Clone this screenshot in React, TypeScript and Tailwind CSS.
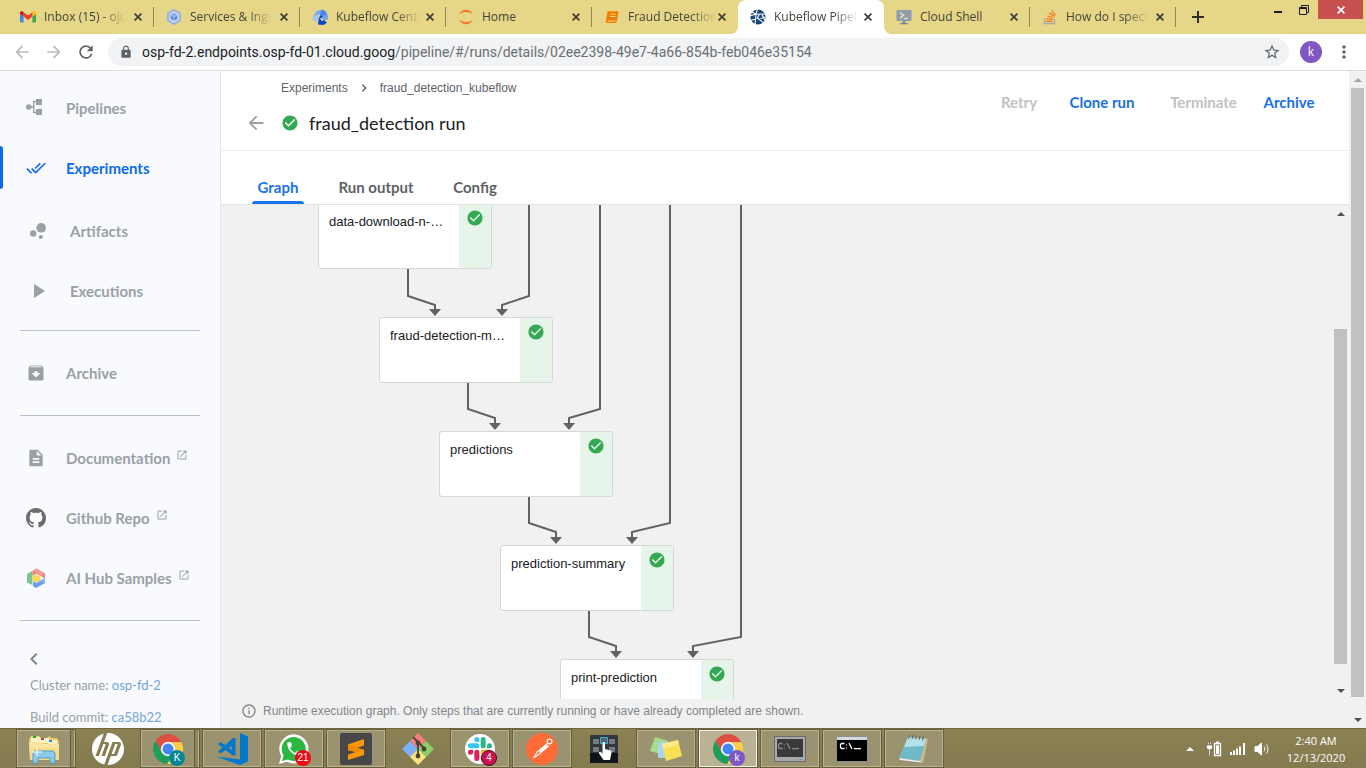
import React from "react";
import {
  MdArchive,
  MdArrowBack,
  MdArrowForward,
  MdBubbleChart,
  MdCheckCircle,
  MdChevronLeft,
  MdChevronRight,
  MdDescription,
  MdDoneAll,
  MdInfoOutline,
  MdLock,
  MdMoreVert,
  MdAdd,
  MdOpenInNew,
  MdPhone,
  MdPlayArrow,
  MdRefresh,
  MdStarBorder,
} from "react-icons/md";
import { SiHp } from "react-icons/si";

const uiFont = "font-['Open_Sans','Noto_Sans',sans-serif]";
const brandFont = "font-['Lato','Open_Sans',sans-serif]";

/* ---------- Browser tab icons ---------- */

const GmailIcon = () => (
  <svg viewBox="0 0 16 12" className="h-3 w-4">
    <path d="M1 11.5h2.6V5.6L0 3v7.5a1 1 0 0 0 1 1z" fill="#4285f4" />
    <path d="M12.4 11.5H15a1 1 0 0 0 1-1V3l-3.600 2.600z" fill="#34a853" />
    <path d="M12.4 1.200v4.400L16 3V1.700C16 .3 14.400-.3 13.400.5z" fill="#fbbc04" />
    <path d="M3.600 5.600V1.200L8 4.500l4.400-3.300v4.400L8 8.900z" fill="#ea4335" />
    <path d="M0 1.700V3l3.600 2.600V1.200l-1-.7C1.600-.3 0 .3 0 1.700z" fill="#c5221f" />
  </svg>
);

const ServicesIcon = () => (
  <svg viewBox="0 0 16 16" className="size-4">
    <path d="M8 1l6 3.400v7.200L8 15l-6-3.400V4.400z" fill="#c9d6e6" stroke="#8fabe8" strokeWidth="1.600" />
    <path d="M8 4.300l3.400 1.900v3.700L8 11.800 4.600 9.900V6.200z" fill="#5f8de8" />
    <path d="M8 4.300l3.400 1.900L8 8 4.600 6.200z" fill="#86a9f0" />
    <path d="M8 8v3.800M8 8l3.400-1.800M8 8L4.600 6.200" stroke="#c9d6e6" strokeWidth=".5" />
  </svg>
);

const KubeflowIcon = () => (
  <svg viewBox="0 0 16 16" className="size-4">
    <path d="M4.500 2L10 .6 8.500 5 1 8z" fill="#7ba9f7" />
    <path d="M10 .6l3.600 1.700L15.500 6 7.500 6z" fill="#4a86f0" />
    <path d="M.3 7.500L7 5.300 4.500 13.500 1.200 11z" fill="#a3c2fa" />
    <path d="M8 6l7.600 0L16 10l-3.500 1.500z" fill="#6f9ff5" />
    <path d="M7 7.500l8 6-3.500 2.400-5.500-.4z" fill="#0c46c9" />
    <path d="M8 6.500h3.500L7.500 11z" fill="#0c46c9" />
    <path d="M7.300 8.500L11.500 11l-1.500 1z" fill="#fff" />
  </svg>
);

const JupyterIcon = () => (
  <svg viewBox="0 0 16 16" className="size-4">
    <path d="M1 5.500C2.500 2.300 5 .8 8 .8s5.500 1.500 7 4.700C13 3.700 10.700 3 8 3s-5 .7-7 2.500z" fill="#f37726" />
    <path d="M1 10.500c1.500 3.200 4 4.700 7 4.700s5.500-1.500 7-4.700c-2 1.800-4.300 2.500-7 2.500s-5-.7-7-2.500z" fill="#f37726" />
  </svg>
);

const BookIcon = () => (
  <svg viewBox="0 0 16 16" className="size-4">
    <path d="M4.800 2.200h8.800c.6 0 .9.400.8 1L12.800 12.500c-.1.700-.7 1.500-1.500 1.500H3.200c-1 0-1.600-.7-1.400-1.700l1.500-8.800c.1-.8.800-1.300 1.500-1.300z" fill="#f57c00" />
    <path d="M6.300 5.200h5.400M5.900 7.500h5.400M3.400 12h8" stroke="#f3dba0" strokeWidth="1" />
  </svg>
);

const PipelineLogo = () => (
  <svg viewBox="0 0 16 16" className="size-4">
    <circle cx="8" cy="8" r="7.600" fill="#17477c" />
    <path d="M0 6.800l6-1.600L5 16M6 5.200L7.500 0M6 5.200L16 5M9.500 5l-2.500 5M7.500 9l7 5.500M1 2.500L6 5.200M12 5.500l3.500 7M10.500 9.500l5-1.500M0 11.500l6-1.500" stroke="#fff" strokeWidth="1.100" fill="none" />
  </svg>
);

const CloudShellIcon = () => (
  <svg viewBox="0 0 16 16" className="size-4">
    <rect x=".5" y="1" width="15" height="11" rx="1" fill="#8f9bb0" />
    <path d="M6.500 12h3v2H12v1.200H4V14h2.500z" fill="#7d8899" />
    <path d="M4 3.500l3.500 2.700L4 9" stroke="#f3e3a0" strokeWidth="1.500" fill="none" />
    <path d="M8 9.500h4" stroke="#f3e3a0" strokeWidth="1.300" />
  </svg>
);

const StackOverflowIcon = () => (
  <svg viewBox="0 0 16 16" className="size-4">
    <path d="M2.500 9.500v5h10v-5" stroke="#a9a9a2" strokeWidth="1.400" fill="none" />
    <path d="M4.300 12.200h6.400M4.500 9.700l6.300.7M5.300 6.900l6 1.900M7 3.900l5.200 3.400M9.700 1.500l3.600 4.800" stroke="#f48024" strokeWidth="1.400" fill="none" />
  </svg>
);

type Tab = { title: string; icon: React.ReactNode; active?: boolean; divider?: boolean };

const tabs: Tab[] = [
  { title: "Inbox (15) - oju", icon: <GmailIcon />, divider: true },
  { title: "Services & Ingr", icon: <ServicesIcon />, divider: true },
  { title: "Kubeflow Centr", icon: <KubeflowIcon />, divider: true },
  { title: "Home", icon: <JupyterIcon />, divider: true },
  { title: "Fraud Detection", icon: <BookIcon /> },
  { title: "Kubeflow Pipeli", icon: <PipelineLogo />, active: true },
  { title: "Cloud Shell", icon: <CloudShellIcon />, divider: true },
  { title: "How do I specif", icon: <StackOverflowIcon />, divider: true },
];

function BrowserTab({ tab }: { tab: Tab }) {
  const fade = tab.title.length > 12;
  return (
    <div className={`relative flex h-full w-[146px] shrink items-center pl-3 pr-2 ${tab.active ? "rounded-t-lg bg-white" : ""}`}>
      {tab.active && (
        <>
          <span className="absolute bottom-0 -left-2 size-2 bg-[radial-gradient(circle_at_0_0,transparent_8px,white_8px)]" />
          <span className="absolute bottom-0 -right-2 size-2 bg-[radial-gradient(circle_at_100%_0,transparent_8px,white_8px)]" />
        </>
      )}
      <a href="#" className="flex min-w-0 flex-1 items-center gap-2">
        <span className="flex size-4 shrink-0 items-center justify-center">{tab.icon}</span>
        <span className={`whitespace-nowrap text-xs text-[#45443a] ${fade ? "[mask-image:linear-gradient(to_right,black_70%,transparent_98%)]" : ""}`}>
          {tab.title}
        </span>
      </a>
      <button aria-label={`Close ${tab.title}`} className="flex size-4 shrink-0 items-center justify-center">
        <svg viewBox="0 0 8 8" className="size-2" fill="none" stroke="#3c3b30" strokeWidth="1.700">
          <path d="M.6.6l6.800 6.800M7.400.6L.6 7.400" />
        </svg>
      </button>
      {tab.divider && <span className="absolute right-0 top-[7px] h-5 w-px bg-[#8f8654]" />}
    </div>
  );
}

function BrowserChrome() {
  return (
    <header className={`shrink-0 ${uiFont}`}>
      <div className="flex h-[34px] bg-[#e6d687] pl-2">
        <div className="flex min-w-0">
          {tabs.map((t) => (
            <BrowserTab key={t.title} tab={t} />
          ))}
        </div>
        <button aria-label="New tab" className="ml-3 flex w-5 items-center justify-center">
          <svg viewBox="0 0 12 12" className="size-3" stroke="#2e2d26" strokeWidth="2">
            <path d="M6 0v12M0 6h12" />
          </svg>
        </button>
        <div className="ml-auto flex items-start pr-[3px]">
          <button aria-label="Minimize" className="flex h-[19px] w-6 items-center justify-center">
            <span className="mt-1 h-0.5 w-2 bg-[#1d1c17]" />
          </button>
          <button aria-label="Restore" className="flex h-[19px] w-7 items-center justify-center">
            <svg viewBox="0 0 10 10" className="size-2.5" fill="none" stroke="#1d1c17">
              <path d="M2.500 2V.5h7v7H8" />
              <path d="M.5 2.500h7v7h-7z" />
              <path d="M.5 3.500h7" />
            </svg>
          </button>
          <button aria-label="Close window" className="flex h-[19px] w-[45px] items-center justify-center bg-[#c75050]">
            <svg viewBox="0 0 8 8" className="size-2" stroke="#fff" strokeWidth="1.700">
              <path d="M.6.6l6.800 6.800M7.400.6L.6 7.400" />
            </svg>
          </button>
        </div>
      </div>
      <div className="flex h-[37px] items-center border-b border-[#dadce0] bg-white pl-3 pr-3">
        <button aria-label="Back" className="mr-3 text-[#b9bbbe]"><MdArrowBack className="size-5" /></button>
        <button aria-label="Forward" className="mr-3 text-[#b9bbbe]"><MdArrowForward className="size-5" /></button>
        <button aria-label="Reload" className="mr-3 text-[#5f6368]"><MdRefresh className="size-5" /></button>
        <div className="flex h-7 flex-1 items-center rounded-full bg-[#f1f3f4] pl-[11px] pr-2">
          <MdLock className="mr-[9px] size-3.5 text-[#5f6368]" />
          <p className="flex-1 whitespace-nowrap font-['Roboto','Open_Sans',sans-serif] text-sm text-[#6b6f74]">
            <span className="text-[#202124]">osp-fd-2.endpoints.osp-fd-01.cloud.goog</span>
            /pipeline/#/runs/details/02ee2398-49e7-4a66-854b-feb046e35154
          </p>
          <button aria-label="Bookmark" className="text-[#5f6368]"><MdStarBorder className="size-[18px]" /></button>
        </div>
        <button aria-label="Profile" className="ml-[11px] size-[22px] rounded-full bg-[#7e57c2] text-xs leading-none text-white">k</button>
        <button aria-label="Menu" className="ml-3 text-[#5f6368]"><MdMoreVert className="size-5" /></button>
      </div>
    </header>
  );
}

/* ---------- Scroll bar ---------- */

function ScrollBar({ grow, thumb, topMuted, tail }: { grow: string; thumb: string; topMuted?: boolean; tail: string }) {
  return (
    <div aria-hidden className="flex w-[17px] shrink-0 flex-col items-center bg-[#f1f1f1]">
      <div className="flex h-[17px] shrink-0 items-center">
        <svg viewBox="0 0 8 4" className="h-1 w-2"><path d="M0 4l4-4 4 4z" fill={topMuted ? "#a3a3a3" : "#505050"} /></svg>
      </div>
      <div className={grow} />
      <div className={`w-[13px] bg-[#c1c1c1] ${thumb}`} />
      <div className={tail} />
      <div className="flex h-[17px] shrink-0 items-center">
        <svg viewBox="0 0 8 4" className="h-1 w-2"><path d="M0 0l4 4 4-4z" fill="#505050" /></svg>
      </div>
    </div>
  );
}

/* ---------- Side navigation ---------- */

const PipelinesIcon = () => (
  <svg viewBox="0 0 20 20" className="size-5" fill="currentColor">
    <circle cx="2.700" cy="9" r="2.700" />
    <path d="M10 1h6v6h-6zM10 11h6v6h-6z" />
    <path d="M5 9h3M10.500 3.500H7.800v11h2.700" fill="none" stroke="currentColor" strokeWidth="1.400" />
  </svg>
);

const GithubIcon = () => (
  <svg viewBox="0 0 16 16" className="size-5" fill="#6b6b6b">
    <path d="M8 0C3.580 0 0 3.580 0 8c0 3.540 2.290 6.530 5.470 7.590.4.070.55-.17.55-.38 0-.19-.01-.82-.01-1.490-2.010.37-2.530-.49-2.690-.94-.09-.23-.48-.94-.82-1.130-.28-.15-.68-.52-.01-.53.63-.01 1.080.58 1.230.82.72 1.210 1.870.87 2.330.66.07-.52.28-.87.51-1.070-1.780-.2-3.640-.89-3.640-3.950 0-.87.31-1.590.82-2.150-.08-.2-.36-1.020.08-2.120 0 0 .67-.21 2.200.82.64-.18 1.320-.27 2-.27s1.360.09 2 .27c1.530-1.040 2.200-.82 2.200-.82.44 1.100.16 1.920.08 2.120.51.56.82 1.270.82 2.150 0 3.070-1.870 3.750-3.650 3.950.29.25.54.73.54 1.480 0 1.070-.01 1.930-.01 2.200 0 .21.15.46.55.38A8.013 8.013 0 0 0 16 8c0-4.420-3.580-8-8-8z" />
  </svg>
);

const AiHubIcon = () => (
  <svg viewBox="0 0 20 20" className="size-5">
    <path d="M1 6l5.500-3.200V8L6.300 13v4L1 14.500z" fill="#7cc492" />
    <path d="M6.500 3L10.500.5 19 5.400v5.200l-5-3.100-3.500-2-3.800 2.200z" fill="#ef7d74" />
    <path d="M6.500 3L10.500.5 19 5.400l-4.300 2.500z" fill="#f39c95" />
    <path d="M19 10v5l-9 5-3-1.800v-5l3.500 1.700 4-2.400z" fill="#6d9df0" />
    <path d="M19 10v5l-5-2.500z" fill="#8fb4f5" />
    <path d="M10.300 6.200l4 2.200v4.200l-4 2.200-3.900-2.200V8.400z" fill="#fbd65b" />
  </svg>
);

function NavItem({ icon, label, active, inset, external }: { icon: React.ReactNode; label: string; active?: boolean; inset?: boolean; external?: boolean }) {
  return (
    <a
      href="#"
      className={`relative flex h-[60px] shrink-0 items-center text-[15px] font-bold ${inset ? "gap-[22px] pl-7" : "gap-5 pl-[26px]"} ${active ? "text-[#0d6aee]" : "text-[#9aa0a6]"}`}
    >
      {active && <span className="absolute left-0 top-2 h-[43px] w-[3px] rounded-r bg-[#0d6aee]" />}
      <span className="flex size-5 shrink-0 items-center justify-center">{icon}</span>
      <span className="flex items-center gap-1.5">
        {label}
        {external && <MdOpenInNew className="mb-1.5 size-3" />}
      </span>
    </a>
  );
}

const Rule = ({ className }: { className: string }) => <div className={`mx-5 h-px shrink-0 bg-[#bdc1c6] ${className}`} />;

function Sidebar() {
  return (
    <nav className={`flex w-[221px] shrink-0 flex-col overflow-hidden border-r border-[#e3e5ea] bg-[#f8fafd] pt-[7px] ${brandFont}`}>
      <NavItem icon={<PipelinesIcon />} label="Pipelines" />
      <NavItem icon={<MdDoneAll className="size-5" />} label="Experiments" active />
      <div className="h-[3px] shrink-0" />
      <NavItem icon={<MdBubbleChart className="size-6 shrink-0" />} label="Artifacts" inset />
      <NavItem icon={<MdPlayArrow className="size-6 shrink-0" />} label="Executions" inset />
      <Rule className="mb-3 mt-[9px]" />
      <NavItem icon={<MdArchive className="size-5" />} label="Archive" />
      <Rule className="my-3" />
      <NavItem icon={<MdDescription className="size-5" />} label="Documentation" external />
      <NavItem icon={<GithubIcon />} label="Github Repo" external />
      <NavItem icon={<AiHubIcon />} label="AI Hub Samples" external />
      <Rule className="my-3" />
      <button aria-label="Collapse navigation" className="ml-[22px] mt-3.5 flex size-6 shrink-0 items-center justify-center text-[#80868b]">
        <MdChevronLeft className="size-6" />
      </button>
      <p className="ml-[30px] mt-1 shrink-0 whitespace-nowrap text-[13px] leading-5 text-[#9aa0a6]">
        Cluster name: <a href="#" className="text-[#74a4dc]">osp-fd-2</a>
      </p>
      <p className="ml-[30px] mt-3 shrink-0 whitespace-nowrap text-[13px] leading-5 text-[#9aa0a6]">
        Build commit: <a href="#" className="text-[#74a4dc]">ca58b22</a>
      </p>
    </nav>
  );
}

/* ---------- Run graph ---------- */

const nodes = [
  { label: "data-download-n-clean", place: "left-[97px] -top-[2px]" },
  { label: "fraud-detection-model", place: "left-[158px] top-[112px]" },
  { label: "predictions", place: "left-[218px] top-[226px]" },
  { label: "prediction-summary", place: "left-[279px] top-[340px]" },
  { label: "print-prediction", place: "left-[339px] top-[454px]" },
];

const edges = [
  "M187 64V91L214 100V106",
  "M308 0V91L281 100V106",
  "M247 178V204L274 213V220",
  "M379 0V204L348 213V220",
  "M308 292V318L335 327V334",
  "M449 0V318L411 327V334",
  "M368 406V432L395 441V448",
  "M520 0V432L472 441V448",
];

const arrowHeads = [[214, 104], [281, 104], [274, 218], [348, 218], [335, 332], [411, 332], [395, 446], [472, 446]];

function Graph() {
  return (
    <div className="relative min-w-0 flex-1 overflow-hidden">
      <svg className="absolute left-0 top-0" width="760" height="494" fill="none" stroke="#5f6368" strokeWidth="2">
        {edges.map((d) => <path key={d} d={d} />)}
        {arrowHeads.map(([x, y]) => (
          <path key={`${x}-${y}`} d={`M${x - 6} ${y}h12l-6 7z`} fill="#5f6368" stroke="none" />
        ))}
      </svg>
      {nodes.map((n) => (
        <div key={n.label} className={`absolute flex h-[66px] w-[174px] overflow-hidden rounded-[3px] border border-[#d6d6d6] bg-white ${n.place}`}>
          <span className="min-w-0 flex-1 truncate pl-2.5 pr-3 pt-2 text-[13px] leading-5 text-[#202124]">{n.label}</span>
          <span className="flex w-8 shrink-0 justify-center bg-[#e6f4ea] pt-[5px]">
            <MdCheckCircle className="size-[18px] text-[#34a853]" />
          </span>
        </div>
      ))}
    </div>
  );
}

function RunDetails() {
  return (
    <main className="flex min-w-0 flex-1 flex-col bg-white">
      <div className="flex h-20 shrink-0 justify-between border-b border-[#ececec]">
        <div className="pl-6 pt-2">
          <div className="ml-9 flex h-[18px] items-center text-xs text-[#5f6368]">
            <a href="#">Experiments</a>
            <MdChevronRight className="mx-2 size-4" />
            <a href="#">fraud_detection_kubeflow</a>
          </div>
          <div className="mt-3 flex h-7 items-center">
            <button aria-label="Go back" className="mr-3.5 text-[#9e9e9e]"><MdArrowBack className="size-[22px]" /></button>
            <MdCheckCircle className="mr-2.5 size-[18px] text-[#34a853]" />
            <h1 className={`text-lg text-[#202124] ${brandFont}`}>fraud_detection run</h1>
          </div>
        </div>
        <div className={`flex h-[62px] items-center gap-2 pr-7 text-[15px] font-bold ${brandFont}`}>
          <button disabled className="w-[54px] text-[#c0c2c5]">Retry</button>
          <button className="w-24 text-[#1a6fe8]">Clone run</button>
          <button disabled className="w-[91px] text-[#c0c2c5]">Terminate</button>
          <button className="w-16 text-[#1a6fe8]">Archive</button>
        </div>
      </div>
      <div role="tablist" className={`flex h-[54px] shrink-0 items-end gap-8 border-b border-[#e4e4e4] pl-[31px] text-[15px] font-bold text-[#5f6368] ${brandFont}`}>
        <button role="tab" aria-selected="true" className="relative h-[34px] w-[52px] text-[#1a73e8]">
          Graph
          <span className="absolute inset-x-0 bottom-0 h-[3px] rounded-t bg-[#1a73e8]" />
        </button>
        <button role="tab" className="h-[34px] w-20">Run output</button>
        <button role="tab" className="h-[34px] w-[54px]">Config</button>
      </div>
      <div className="flex min-h-0 flex-1 bg-[#f1f1f1]">
        <Graph />
        <ScrollBar grow="flex-[107]" thumb="flex-[335]" tail="flex-[18]" />
      </div>
      <div className="flex h-[29px] shrink-0 items-center bg-[#f1f1f1] pb-1.5 pl-5 text-xs text-[#80868b]">
        <MdInfoOutline className="mr-1.5 size-4" />
        Runtime execution graph. Only steps that are currently running or have already completed are shown.
      </div>
    </main>
  );
}

/* ---------- Task bar ---------- */

function Badge({ text, className }: { text: string; className: string }) {
  return (
    <span className={`absolute -bottom-0.5 -right-0.5 flex size-4 items-center justify-center rounded-full font-['Liberation_Sans',sans-serif] text-[10px] leading-none text-white ${className}`}>
      {text}
    </span>
  );
}

const ChromeIcon = () => (
  <svg viewBox="2 2 44 44" className="size-[30px]">
    <path d="M24 14H43.600A22 22 0 0 0 5.550 12.020L15.340 29 24 24z" fill="#de4f43" />
    <path d="M5.550 12.020A22 22 0 0 0 22.850 45.970L32.660 29 24 24 15.340 29z" fill="#1f9d5a" />
    <path d="M22.850 45.970A22 22 0 0 0 43.600 14H24v10l8.660 5z" fill="#fdcf48" />
    <circle cx="24" cy="24" r="10.500" fill="#f5f5f5" />
    <circle cx="24" cy="24" r="8" fill="#4285f4" />
  </svg>
);

const FolderIcon = () => (
  <svg viewBox="0 0 32 30" className="h-[30px] w-8">
    <path d="M1 5l2-3h8l2 2h6l2-2 3 2h5l2 3v19H2z" fill="#e6c968" />
    <path d="M3 3h9v5H3z" fill="#fbf3c6" />
    <path d="M12 4h9v5h-9z" fill="#fbf3c6" />
    <path d="M20 6h9v5h-9z" fill="#fbf3c6" />
    <path d="M5 2h3v2H5z" fill="#1fa83a" />
    <path d="M13 4h3v2h-3z" fill="#d23b2f" />
    <path d="M21 6h3v2h-3z" fill="#2e86de" />
    <path d="M1 8h10l3 2h17v16H2z" fill="#f8e6a0" />
    <path d="M2 14h29v12H2z" fill="#f4dc8a" />
    <path d="M5 29v-8c0-3 1-4 3-4h16c2 0 3 1 3 4v8h-5v-5H10v5z" fill="#8ecbea" stroke="#4f9dc8" />
    <path d="M9 13v9M4 18h10" stroke="#fff" strokeWidth="1" />
  </svg>
);

const VsCodeIcon = () => (
  <svg viewBox="0 0 32 32" className="size-8">
    <path d="M24 0l8 3.500v25L24 32 0 23.500l24 3z" fill="#0078cc" />
    <path d="M2 11.200L4.500 9l15 11v2.500H17z" fill="#0078cc" />
    <path d="M17 5h2.500v17h-3.800v-9L4.500 20.500 2 18.500z" fill="#0078cc" />
  </svg>
);

const WhatsAppIcon = () => (
  <span className="relative flex size-[30px] items-center justify-center">
    <svg viewBox="0 0 30 30" className="absolute inset-0 size-[30px]">
      <path d="M0 30l2.200-7.800A14.600 14.600 0 1 1 8 27.800z" fill="#fff" />
      <path d="M3 27l1.600-5.600A12 12 0 1 1 9 25.500z" fill="#2bb741" />
    </svg>
    <MdPhone className="relative size-[18px] text-white" />
  </span>
);

const SublimeIcon = () => (
  <svg viewBox="0 0 32 32" className="size-8">
    <rect width="32" height="32" rx="2" fill="#474747" />
    <path d="M8 11.500L24 6v6.500L8 18z" fill="#ff9800" />
    <path d="M8 11.500l16 5.300v5.200L8 17z" fill="#f08a00" />
    <path d="M8 21.500l16-5v5.500L8 27z" fill="#ff9800" />
  </svg>
);

const GitIcon = () => (
  <svg viewBox="0 0 32 32" className="size-8">
    <path d="M16 0l8 8-8 8-8-8z" fill="#f28080" />
    <path d="M8 8l8 8-8 8-8-8z" fill="#7fb0fa" />
    <path d="M24 8l8 8-8 8-8-8z" fill="#8dce68" />
    <path d="M16 16l8 8-8 8-8-8z" fill="#fbe283" />
    <path d="M11 4l5 5v14M16 9l6 6" stroke="#4a4434" strokeWidth="1.800" fill="none" />
    <circle cx="16" cy="10" r="2.400" fill="#4a4434" />
    <circle cx="22" cy="16" r="2.400" fill="#4a4434" />
    <circle cx="16" cy="23" r="2.400" fill="#4a4434" />
  </svg>
);

const slackVertical = "M5.042 15.165a2.528 2.528 0 0 1-2.520 2.523A2.528 2.528 0 0 1 0 15.165a2.527 2.527 0 0 1 2.522-2.520h2.520v2.520zM6.313 15.165a2.527 2.527 0 0 1 2.521-2.520 2.527 2.527 0 0 1 2.521 2.520v6.313A2.528 2.528 0 0 1 8.834 24a2.528 2.528 0 0 1-2.521-2.522v-6.313z";
const slackHorizontal = "M8.834 5.042a2.528 2.528 0 0 1-2.521-2.520A2.528 2.528 0 0 1 8.834 0a2.528 2.528 0 0 1 2.521 2.522v2.520H8.834zM8.834 6.313a2.528 2.528 0 0 1 2.521 2.521 2.528 2.528 0 0 1-2.521 2.521H2.522A2.528 2.528 0 0 1 0 8.834a2.528 2.528 0 0 1 2.522-2.521h6.312z";

const SlackIcon = () => (
  <svg viewBox="-3 -3 30 30" className="size-[30px]">
    <circle cx="12" cy="12" r="15" fill="#fff" />
    <path d={slackVertical} fill="#e01e5a" />
    <path d={slackHorizontal} fill="#36c5f0" />
    <g transform="rotate(180 12 12)">
      <path d={slackVertical} fill="#2eb67d" />
      <path d={slackHorizontal} fill="#ecb22e" />
    </g>
  </svg>
);

const PostmanIcon = () => (
  <svg viewBox="0 0 32 32" className="size-8">
    <circle cx="16" cy="16" r="16" fill="#ff6c37" />
    <circle cx="23.500" cy="8.500" r="2.400" fill="none" stroke="#fff" strokeWidth="1.200" />
    <path d="M21.500 10.500L11 19l-3.500 6 5-3.500L23 12.500" fill="none" stroke="#fff" strokeWidth="1.100" />
    <path d="M20 11.500l2 2-7.500 6.500-1.500-1.500z" fill="#fff" />
  </svg>
);

const TouchIcon = () => (
  <svg viewBox="0 0 28 28" className="size-7">
    <rect width="28" height="28" rx="1" fill="#33383e" />
    <path d="M0 18h28v10H0z" fill="#10141a" />
    <path d="M3 4h6v5H3zM19 4h6v5h-6zM3 12h6v5H3zM19 12h6v5h-6z" fill="#747a80" />
    <path d="M10.500 2.500h7v6h-7z" fill="#5b6268" stroke="#2fb6e6" />
    <path d="M12.500 8c0-1.300 2.500-1.300 2.500 0v6l5.500 1.500c1 .4 1.300 1 1 2.200L20 25h-6.500L9 18.500c-.6-1.200.8-2.200 2-1.300l1.500 1.300z" fill="#fff" />
  </svg>
);

const NotesIcon = () => (
  <svg viewBox="0 0 32 26" className="h-[26px] w-8">
    <path d="M5 1l13 4-4 14L0 15z" fill="#a5dc8a" />
    <path d="M8 6h14v16H8z" fill="#a9d5f5" />
    <path d="M12 8l16-4 4 16-16 5z" fill="#fbdf55" />
    <path d="M12 8l16-4 1 4-16 5z" fill="#fdeb8a" />
  </svg>
);

function TerminalIcon({ dark }: { dark?: boolean }) {
  return (
    <svg viewBox="0 0 32 26" className="h-[26px] w-8">
      <rect x=".5" y=".5" width="31" height="25" fill={dark ? "#000" : "#a9a9a9"} stroke={dark ? "#8f8f8f" : "#6b6b6b"} />
      {dark ? <path d="M1 1h30v3H1z" fill="#d5d9e0" /> : <rect x="3" y="3" width="26" height="18" fill="#3a3a3a" />}
      {!dark && <path d="M25 23.500h3" stroke="#4aa3e0" />}
      <g fill="none" stroke={dark ? "#fff" : "#8a8a8a"} strokeWidth="1.300">
        <path d="M8.500 7.500h-3l-1 1v3l1 1h3M10.500 8.500v1M10.500 11.500v1M13 7l3 6M18 12.700h7" />
      </g>
    </svg>
  );
}

const NotepadIcon = () => (
  <svg viewBox="0 0 32 30" className="h-[30px] w-8">
    <path d="M27 4l3 1-5 24-6-3z" fill="#c9b98c" />
    <path d="M10 3l18 2-6 22L1 24z" fill="#6fb9c8" />
    <path d="M10 3l18 2-2 7L6 13z" fill="#b4e2e8" />
    <path d="M1 24l21 3 1.500 1.500L2 26z" fill="#e9f4f5" />
    <path d="M10.500 5l1-4M14 5.200l1-4M17.500 5.500l1-4M21 6l1-4M24.500 6.500l1-4" stroke="#5f5f5f" strokeWidth="1" />
  </svg>
);

type TaskItem = { name: string; icon: React.ReactNode; kind: "plain" | "open" | "stack" | "focused"; badge?: React.ReactNode };

const tasks: TaskItem[] = [
  { name: "File Explorer", icon: <FolderIcon />, kind: "stack" },
  { name: "HP", icon: <SiHp className="size-8 text-white" />, kind: "plain" },
  { name: "Chrome profile K", icon: <ChromeIcon />, kind: "stack", badge: <Badge text="K" className="bg-[#0b8596]" /> },
  { name: "Visual Studio Code", icon: <VsCodeIcon />, kind: "open" },
  { name: "WhatsApp", icon: <WhatsAppIcon />, kind: "open", badge: <Badge text="21" className="bg-[#f00a14]" /> },
  { name: "Sublime Text", icon: <SublimeIcon />, kind: "open" },
  { name: "Git", icon: <GitIcon />, kind: "plain" },
  { name: "Slack", icon: <SlackIcon />, kind: "open", badge: <Badge text="4" className="border border-[#3c1020] bg-[#d0104c]" /> },
  { name: "Postman", icon: <PostmanIcon />, kind: "open" },
  { name: "Touch keyboard", icon: <TouchIcon />, kind: "plain" },
  { name: "Sticky Notes", icon: <NotesIcon />, kind: "open" },
  { name: "Chrome profile k", icon: <ChromeIcon />, kind: "focused", badge: <Badge text="k" className="bg-[#7e57c2]" /> },
  { name: "Console", icon: <TerminalIcon />, kind: "open" },
  { name: "Command Prompt", icon: <TerminalIcon dark />, kind: "open" },
  { name: "Notepad", icon: <NotepadIcon />, kind: "open" },
];

const taskFrame = {
  plain: "",
  open: "border border-[#b9b391] bg-[#9b9370] outline outline-[#655d38]",
  stack: "border border-[#b9b391] bg-[#9b9370] outline outline-[#655d38]",
  focused: "border border-[#f3f1e6] bg-[#b9b294] outline outline-[#655d38]",
};

function TaskBar() {
  return (
    <footer className={`flex h-10 shrink-0 items-center justify-between border-t border-[#6f673c] bg-gradient-to-b from-[#8b8153] to-[#837a50] pl-[17px] ${uiFont}`}>
      <div className="flex h-full items-stretch gap-1 py-px">
        {tasks.map((t) => (
          <div key={t.name} className="flex w-[58px]">
            <button aria-label={t.name} className={`flex min-w-0 flex-1 items-center justify-center ${taskFrame[t.kind]}`}>
              <span className="relative flex">
                {t.icon}
                {t.badge}
              </span>
            </button>
            {t.kind === "stack" && <span className="w-1 border-r border-[#b9b391] bg-[#8e8560] outline outline-[#655d38]" />}
          </div>
        ))}
      </div>
      <div className="flex items-center pr-5 text-white">
        <svg viewBox="0 0 8 4" className="mr-3 h-1 w-2"><path d="M0 4l4-4 4 4z" fill="#fff" /></svg>
        <svg viewBox="0 0 16 16" className="mr-2 size-4">
          <path d="M8.500 2.500h6v12h-6z" fill="none" stroke="#fff" strokeWidth="1.300" />
          <path d="M10 4.200h3v8.800h-3zM10 .5h3V2h-3z" fill="#fff" />
          <path d="M.5 4h6v3L5 8.500H4.200V15H2.800V8.500H2L.5 7zM1.500 1H3v3H1.500zM4 1h1.500v3H4z" fill="#fff" stroke="#3d3822" strokeWidth=".4" />
        </svg>
        <svg viewBox="0 0 16 12" className="mr-2 h-3 w-4" fill="#fff">
          <path d="M0 9h2v3H0zM3 7.500h2V12H3zM6 5.500h2V12H6zM9 3.500h2V12H9zM13 0h2v12h-2z" />
        </svg>
        <svg viewBox="0 0 16 16" className="mr-4 size-4" fill="none" stroke="#fff">
          <path d="M1 5.500h2.500L7.500 2v12l-4-3.500H1z" fill="#fff" />
          <path d="M10 5.500c1.200 1.500 1.200 3.500 0 5M12.300 3.500c2.200 2.700 2.200 6.300 0 9" />
        </svg>
        <div className="w-[60px] text-center text-[11px] leading-[17px]">
          <p>2:40 AM</p>
          <p>12/13/2020</p>
        </div>
      </div>
    </footer>
  );
}

export default function App() {
  return (
    <div className="flex h-screen flex-col overflow-hidden font-['Liberation_Sans',Arial,sans-serif]">
      <BrowserChrome />
      <div className="flex min-h-0 flex-1">
        <Sidebar />
        <RunDetails />
        <ScrollBar grow="h-0" thumb="flex-[609]" topMuted tail="flex-[14]" />
      </div>
      <TaskBar />
    </div>
  );
}
